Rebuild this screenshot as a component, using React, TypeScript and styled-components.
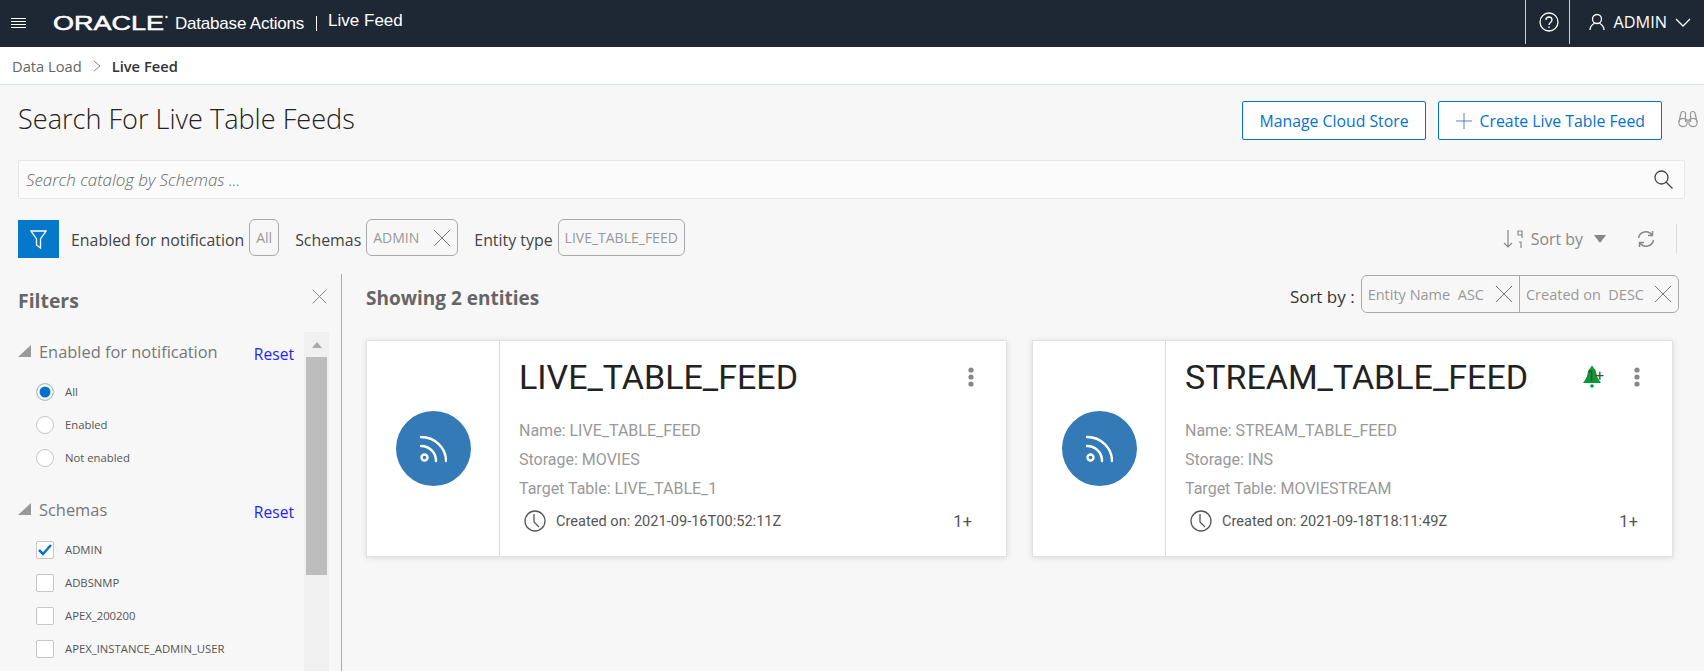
import React from 'react'
import styled, { createGlobalStyle } from 'styled-components'

const Global = createGlobalStyle`
  html, body { margin: 0; padding: 0; height: 100%; }
  body {
    font-family: "Open Sans", "Noto Sans", sans-serif;
    background: #f7f7f7;
    overflow: hidden;
    color: #333;
  }
`

const Page = styled.div`
  width: 1704px;
  height: 671px;
  display: flex;
  flex-direction: column;
  overflow: hidden;
`

const Header = styled.header`
  height: 47px;
  flex: none;
  background: #1e2835;
  color: #fff;
  display: flex;
  align-items: center;
  padding-left: 11px;
`

const Menu = styled.svg`
  width: 15px;
  height: 13px;
  margin-right: 27px;
  flex: none;
`

const Logo = styled.svg`
  width: 116px;
  height: 26px;
  flex: none;
`

const Product = styled.span`
  font: 17px "Liberation Sans", sans-serif;
  margin-left: 6px;
  letter-spacing: -0.2px;
`

const Pipe = styled.span`
  width: 1px;
  height: 15px;
  background: #fff;
  margin: 0 11px 0 12px;
`

const PageName = styled.span`
  font: 17px "Liberation Sans", sans-serif;
  margin-top: -5px;
`

const HeaderRight = styled.div`
  margin-left: auto;
  display: flex;
  align-self: flex-start;
  height: 44px;
`

const HeaderCell = styled.div<{ $wide?: boolean }>`
  display: flex;
  align-items: center;
  height: 100%;
  border-left: 1px solid #c9ccd0;
  padding: ${p => (p.$wide ? '0 13px 0 19px' : '0 10px 0 13px')};
  gap: 8px;
  font-size: 16.3px;
`

const Crumbs = styled.nav`
  height: 38px;
  flex: none;
  box-sizing: border-box;
  background: #fff;
  border-bottom: 1px solid #d6dfe8;
  display: flex;
  align-items: center;
  padding-left: 12px;
  font-size: 14.7px;
  color: #666;
`

const CrumbCurrent = styled.span`
  color: #333;
  font-weight: 600;
`

const CrumbSep = styled.svg`
  width: 8px;
  height: 12px;
  margin: 0 11px;
`

const TitleRow = styled.div`
  display: flex;
  align-items: center;
  padding: 16px 6px 5px 18px;
  height: 60px;
  box-sizing: border-box;
  flex: none;
`

const Title = styled.h1`
  margin: 0 auto 0 0;
  font-size: 27.1px;
  font-weight: 300;
  color: #222;
  position: relative;
  top: -2px;
`

const OutlineButton = styled.button`
  height: 39px;
  box-sizing: border-box;
  border: 1px solid #0572ce;
  border-radius: 2px;
  background: #fff;
  color: #0572ce;
  font: 15.8px "Open Sans", sans-serif;
  padding: 0 16px 0 17px;
  margin-right: 12px;
  display: flex;
  align-items: center;
  gap: 8px;
`

const Binoculars = styled.svg`
  margin: -4px 0 0 4px;
  flex: none;
`

const SearchBar = styled.div`
  margin: 15px 19px 0 18px;
  height: 39px;
  box-sizing: border-box;
  flex: none;
  background: #fbfbfb;
  border: 1px solid #e6e6e6;
  border-radius: 2px;
  display: flex;
  align-items: center;
  justify-content: space-between;
  padding: 0 11px 0 7px;
  font-size: 16.9px;
  font-weight: 300;
  font-style: italic;
  color: #666;
`

const FilterBar = styled.div`
  display: flex;
  align-items: center;
  margin: 21px 0 16px;
  padding-left: 18px;
  height: 38px;
  flex: none;
`

const FilterButton = styled.div`
  width: 41px;
  height: 38px;
  background: #0578c9;
  display: flex;
  align-items: center;
  justify-content: center;
  margin-right: 12px;
`

const ChipLabel = styled.span`
  font-size: 15.9px;
  color: #444;
  margin: 1px 5px 0 0;
`

const Chip = styled.span<{ $closable?: boolean }>`
  height: 37px;
  box-sizing: border-box;
  border: 1px solid #aaa;
  border-radius: 6px;
  padding: 0 6px;
  margin: -3px 16px 0 0;
  display: inline-flex;
  align-items: center;
  gap: ${p => (p.$closable ? '14px' : '6px')};
  font-size: 14px;
  color: #999;
`

const ToolGroup = styled.div`
  margin-left: auto;
  display: flex;
  align-items: center;
  color: #888;
  font-size: 15.9px;
  padding-right: 27px;
`

const SortIcon = styled.svg`
  margin-right: 6px;
`

const Caret = styled.svg`
  margin: 0 31px 0 11px;
`

const ToolRule = styled.span`
  width: 1px;
  height: 30px;
  background: #ddd;
  margin-left: 21px;
`

const Body = styled.div`
  flex: 1;
  display: flex;
  min-height: 0;
`

const Sidebar = styled.aside`
  width: 342px;
  flex: none;
  box-sizing: border-box;
  border-right: 1px solid #aaa;
  padding: 8px 12px 0 18px;
  display: flex;
  flex-direction: column;
  overflow: hidden;
`

const SidebarHead = styled.div`
  display: flex;
  justify-content: space-between;
  align-items: flex-start;
  height: 50px;
  flex: none;
`

const SidebarTitle = styled.h2`
  margin: 5px 0 0;
  font-size: 19.4px;
  font-weight: 700;
  color: #666;
`

const CloseFilters = styled.span`
  margin: 7px 2px 0 0;
  display: flex;
`

const SidebarScroll = styled.div`
  flex: 1;
  display: flex;
  min-height: 0;
`

const Facets = styled.div`
  flex: 1;
  padding-top: 7px;
`

const Facet = styled.section`
  margin-bottom: 23px;
`

const FacetHead = styled.div`
  display: flex;
  align-items: center;
  height: 24px;
  margin-bottom: 12px;
  padding-right: 10px;
`

const FacetName = styled.span`
  font-size: 16.4px;
  font-weight: 500;
  color: #777;
  margin-left: 8px;
`

const Reset = styled.span`
  margin: 5px 0 0 auto;
  font-size: 15.6px;
  color: #2222ff;
`

const Option = styled.div`
  height: 33px;
  display: flex;
  align-items: center;
  gap: 11px;
  padding-left: 18px;
  font-size: 11.3px;
  color: #555;
`

const Radio = styled.span<{ $on?: boolean }>`
  width: 18px;
  height: 18px;
  box-sizing: border-box;
  border-radius: 50%;
  border: 1px solid #c6c6c6;
  background: ${p => (p.$on ? '#0572ce' : '#fff')};
  box-shadow: ${p => (p.$on ? 'inset 0 0 0 2.5px #fff' : 'none')};
`

const Check = styled.span`
  width: 18px;
  height: 18px;
  box-sizing: border-box;
  border-radius: 2px;
  border: 1px solid #c6c6c6;
  background: #fff;
  display: flex;
  align-items: center;
  justify-content: center;
`

const Track = styled.div`
  width: 25px;
  flex: none;
  background: #f0f0f0;
  display: flex;
  flex-direction: column;
  align-items: center;
`

const TrackArrow = styled.div`
  height: 25px;
  display: flex;
  align-items: center;
  justify-content: center;
  &::before {
    content: '';
    border: 5px solid transparent;
    border-top: 0;
    border-bottom: 6px solid #aaa;
  }
`

const Thumb = styled.div`
  width: 21px;
  height: 218px;
  background: #bdbdbd;
`

const Main = styled.main`
  flex: 1;
  min-width: 0;
  padding: 0 25px 0 24px;
`

const MainHead = styled.div`
  display: flex;
  align-items: center;
  height: 39px;
`

const Showing = styled.h2`
  margin: 8px auto 0 0;
  font-size: 19px;
  font-weight: 700;
  color: #666;
`

const SortLabel = styled.span`
  font-size: 17px;
  color: #333;
  margin: 5px 6px 0 0;
`

const SortGroup = styled.div`
  display: flex;
  height: 38px;
  box-sizing: border-box;
  border: 1px solid #aaa;
  border-radius: 6px;
`

const SortChip = styled.span`
  display: flex;
  align-items: center;
  gap: 11px;
  padding: 1px 6px 0;
  font-size: 14.5px;
  color: #999;
  & + & {
    border-left: 1px solid #aaa;
    gap: 10px;
  }
`

const Cards = styled.div`
  display: grid;
  grid-template-columns: 641px 641px;
  gap: 25px;
  margin-top: 27px;
`

const Card = styled.article`
  height: 217px;
  box-sizing: border-box;
  background: #fff;
  border: 1px solid #e2e2e2;
  box-shadow: 0 1px 6px rgba(0, 0, 0, 0.12);
  display: flex;
`

const CardSide = styled.div`
  width: 132px;
  flex: none;
  border-right: 1px solid #ddd;
  display: flex;
  align-items: center;
  justify-content: center;
`

const Avatar = styled.div`
  width: 75px;
  height: 75px;
  border-radius: 50%;
  background: #337ab7;
  display: flex;
  align-items: center;
  justify-content: center;
`

const CardBody = styled.div`
  flex: 1;
  min-width: 0;
  padding: 13px 32px 0 19px;
  font-family: Roboto, "Liberation Sans", sans-serif;
`

const CardTitleRow = styled.div`
  display: flex;
  align-items: center;
  height: 46px;
  margin-bottom: 16px;
`

const CardTitle = styled.h3`
  margin: 0 auto 0 0;
  font-size: 34px;
  font-weight: 400;
  color: #222;
`

const Bell = styled.div`
  position: relative;
  margin-right: 33px;
  display: flex;
`

const BellBadge = styled.span`
  position: absolute;
  left: 4px;
  top: 3px;
  font-size: 15px;
  line-height: 15px;
  color: #444;
`

const Kebab = styled.svg`
  width: 6px;
  height: 20px;
  flex: none;
`

const Detail = styled.div`
  height: 29px;
  line-height: 29px;
  font-size: 16px;
  color: #999;
`

const CardFoot = styled.div`
  display: flex;
  align-items: center;
  height: 30px;
  margin-top: 3px;
  padding: 0 2px 0 5px;
  font-size: 14.6px;
  color: #555;
  gap: 10px;
`

const Count = styled.span`
  margin-left: auto;
  font-size: 16.5px;
`

const SmallX = ({ size = 18, color = '#888' }: { size?: number; color?: string }) => (
  <svg width={size} height={size} viewBox="0 0 20 20" fill="none" stroke={color} strokeWidth={20 / size}>
    <path d="M1 1l18 18M19 1L1 19" />
  </svg>
)

const Rss = () => (
  <svg width="28" height="28" viewBox="0 0 28 28" fill="none" stroke="#fff" strokeWidth="2.4" strokeLinecap="round">
    <circle cx="5.5" cy="22.5" r="3" />
    <path d="M2 11c8 0 15 6 15 15" />
    <path d="M2 2c14 0 25 11 25 24" />
  </svg>
)

const Clock = () => (
  <svg width="22" height="22" viewBox="0 0 22 22" fill="none" stroke="#555" strokeWidth="1.3">
    <circle cx="11" cy="11" r="10" />
    <path d="M10 4v8l5 5" />
  </svg>
)

const Dots = () => (
  <Kebab viewBox="0 0 6 20" fill="#888">
    <circle cx="3" cy="3" r="2.6" />
    <circle cx="3" cy="10" r="2.6" />
    <circle cx="3" cy="17" r="2.6" />
  </Kebab>
)

const Triangle = () => (
  <svg width="13" height="12" viewBox="0 0 13 12" fill="#999">
    <path d="M13 0v12H0z" />
  </svg>
)

type Feed = { name: string; storage: string; table: string; created: string; bell?: boolean }

const feeds: Feed[] = [
  { name: 'LIVE_TABLE_FEED', storage: 'MOVIES', table: 'LIVE_TABLE_1', created: '2021-09-16T00:52:11Z' },
  { name: 'STREAM_TABLE_FEED', storage: 'INS', table: 'MOVIESTREAM', created: '2021-09-18T18:11:49Z', bell: true },
]

const schemas = ['ADMIN', 'ADBSNMP', 'APEX_200200', 'APEX_INSTANCE_ADMIN_USER']

export default function App() {
  return (
    <Page>
      <Global />
      <Header>
        <Menu viewBox="0 0 15 13" stroke="#fff" strokeWidth="1">
          <path d="M0 1.5h15M0 4.5h15M0 7.5h15M0 10.5h15" />
        </Menu>
        <Logo viewBox="0 0 116 26">
          <text
            x="0"
            y="18.5"
            textLength="111"
            lengthAdjust="spacingAndGlyphs"
            fill="#fff"
            stroke="#fff"
            strokeWidth="0.5"
            fontFamily="Liberation Sans"
            fontSize="19.5"
          >
            ORACLE
          </text>
          <circle cx="113.5" cy="6" r="1.2" fill="#fff" />
        </Logo>
        <Product>Database Actions</Product>
        <Pipe />
        <PageName>Live Feed</PageName>
        <HeaderRight>
          <HeaderCell>
            <svg width="20" height="20" viewBox="0 0 20 20" fill="none" stroke="#fff" strokeWidth="1.3">
              <circle cx="10" cy="10" r="9" />
              <path d="M7 8c0-4 6-4 6 0 0 2.500-3 2.500-3 5" />
              <path d="M10 14.500v1.500" />
            </svg>
          </HeaderCell>
          <HeaderCell $wide>
            <svg width="16" height="18" viewBox="0 0 16 18" fill="none" stroke="#fff" strokeWidth="1.3">
              <circle cx="8" cy="6" r="4.500" />
              <path d="M1 17c0-4 3-6 4.500-6.800M15 17c0-4-3-6-4.500-6.800" />
            </svg>
            <span>ADMIN</span>
            <svg width="16" height="9" viewBox="0 0 16 9" fill="none" stroke="#fff" strokeWidth="1.300">
              <path d="M1 1l7 7 7-7" />
            </svg>
          </HeaderCell>
        </HeaderRight>
      </Header>
      <Crumbs>
        <span>Data Load</span>
        <CrumbSep viewBox="0 0 8 12" fill="none" stroke="#888">
          <path d="M1 1l6 5-6 5" />
        </CrumbSep>
        <CrumbCurrent>Live Feed</CrumbCurrent>
      </Crumbs>
      <TitleRow>
        <Title>Search For Live Table Feeds</Title>
        <OutlineButton>Manage Cloud Store</OutlineButton>
        <OutlineButton>
          <svg width="16" height="16" viewBox="0 0 16 16" stroke="#5580b8">
            <path d="M8 0v16M0 8h16" />
          </svg>
          Create Live Table Feed
        </OutlineButton>
        <Binoculars width="20" height="18" viewBox="0 0 20 18" fill="none" stroke="#999" strokeWidth="1.2">
          <circle cx="5" cy="12.500" r="4.200" />
          <circle cx="15" cy="12.500" r="4.200" />
          <path d="M1 12L3 3c.5-2 4-2 4.500 0v9M19 12L17 3c-.5-2-4-2-4.500 0v9M7.500 10h5" />
        </Binoculars>
      </TitleRow>
      <SearchBar>
        <span>Search catalog by Schemas ...</span>
        <svg width="19" height="19" viewBox="0 0 19 19" fill="none" stroke="#444" strokeWidth="1.300">
          <circle cx="7.500" cy="7.500" r="6.500" />
          <path d="M12 12l6.500 6.500" />
        </svg>
      </SearchBar>
      <FilterBar>
        <FilterButton>
          <svg width="17" height="19" viewBox="0 0 17 19" fill="none" stroke="#fff" strokeWidth="1.300">
            <path d="M1 1h15l-5.500 8v9l-4-3V9z" />
          </svg>
        </FilterButton>
        <ChipLabel>Enabled for notification</ChipLabel>
        <Chip>All</Chip>
        <ChipLabel>Schemas</ChipLabel>
        <Chip $closable>
          ADMIN
          <SmallX color="#777" />
        </Chip>
        <ChipLabel>Entity type</ChipLabel>
        <Chip>LIVE_TABLE_FEED</Chip>
        <ToolGroup>
          <SortIcon width="22" height="20" viewBox="0 0 22 20" fill="none" stroke="#888" strokeWidth="1.200">
            <path d="M5 1v17M1 14l4 4 4-4" />
            <path d="M15 2h4v4h-4zM19 6v3M16 13h2v6" />
          </SortIcon>
          <span>Sort by</span>
          <Caret width="12" height="8" viewBox="0 0 12 8" fill="#888">
            <path d="M0 0h12L6 8z" />
          </Caret>
          <svg width="18" height="18" viewBox="0 0 18 18" fill="none" stroke="#888" strokeWidth="1.500">
            <path d="M1.500 8A7.500 7.500 0 0 1 15 5M16.500 10A7.500 7.500 0 0 1 3 13" />
            <path d="M15.500 1v4.500H11M2.500 17v-4.500H7" />
          </svg>
          <ToolRule />
        </ToolGroup>
      </FilterBar>
      <Body>
        <Sidebar>
          <SidebarHead>
            <SidebarTitle>Filters</SidebarTitle>
            <CloseFilters>
              <SmallX size={15} />
            </CloseFilters>
          </SidebarHead>
          <SidebarScroll>
            <Facets>
              <Facet>
                <FacetHead>
                  <Triangle />
                  <FacetName>Enabled for notification</FacetName>
                  <Reset>Reset</Reset>
                </FacetHead>
                <Option><Radio $on />All</Option>
                <Option><Radio />Enabled</Option>
                <Option><Radio />Not enabled</Option>
              </Facet>
              <Facet>
                <FacetHead>
                  <Triangle />
                  <FacetName>Schemas</FacetName>
                  <Reset>Reset</Reset>
                </FacetHead>
                {schemas.map((s, i) => (
                  <Option key={s}>
                    <Check>
                      {i === 0 && (
                        <svg width="14" height="12" viewBox="0 0 14 12" fill="none" stroke="#0572ce" strokeWidth="2.500">
                          <path d="M1 6l4 4 8-9" />
                        </svg>
                      )}
                    </Check>
                    {s}
                  </Option>
                ))}
              </Facet>
            </Facets>
            <Track>
              <TrackArrow />
              <Thumb />
            </Track>
          </SidebarScroll>
        </Sidebar>
        <Main>
          <MainHead>
            <Showing>Showing 2 entities</Showing>
            <SortLabel>Sort by :</SortLabel>
            <SortGroup>
              <SortChip>
                Entity Name&nbsp; ASC
                <SmallX color="#777" />
              </SortChip>
              <SortChip>
                Created on&nbsp; DESC
                <SmallX color="#777" />
              </SortChip>
            </SortGroup>
          </MainHead>
          <Cards>
            {feeds.map(f => (
              <Card key={f.name}>
                <CardSide>
                  <Avatar>
                    <Rss />
                  </Avatar>
                </CardSide>
                <CardBody>
                  <CardTitleRow>
                    <CardTitle>{f.name}</CardTitle>
                    {f.bell && (
                      <Bell>
                        <svg width="18" height="22" viewBox="0 0 18 22" fill="#0a9a35">
                          <path d="M9 0c1 0 1.500 1 1.500 2 2 1 2.500 3 3 6 .5 3 2 5.500 4.500 9H0c2.500-3.500 4-6 4.500-9 .5-3 1-5 3-6C7.500 1 8 0 9 0z" />
                          <circle cx="9" cy="20" r="1.800" />
                        </svg>
                        <BellBadge>1+</BellBadge>
                      </Bell>
                    )}
                    <Dots />
                  </CardTitleRow>
                  <Detail>Name: {f.name}</Detail>
                  <Detail>Storage: {f.storage}</Detail>
                  <Detail>Target Table: {f.table}</Detail>
                  <CardFoot>
                    <Clock />
                    <span>Created on: {f.created}</span>
                    <Count>1+</Count>
                  </CardFoot>
                </CardBody>
              </Card>
            ))}
          </Cards>
        </Main>
      </Body>
    </Page>
  )
}
